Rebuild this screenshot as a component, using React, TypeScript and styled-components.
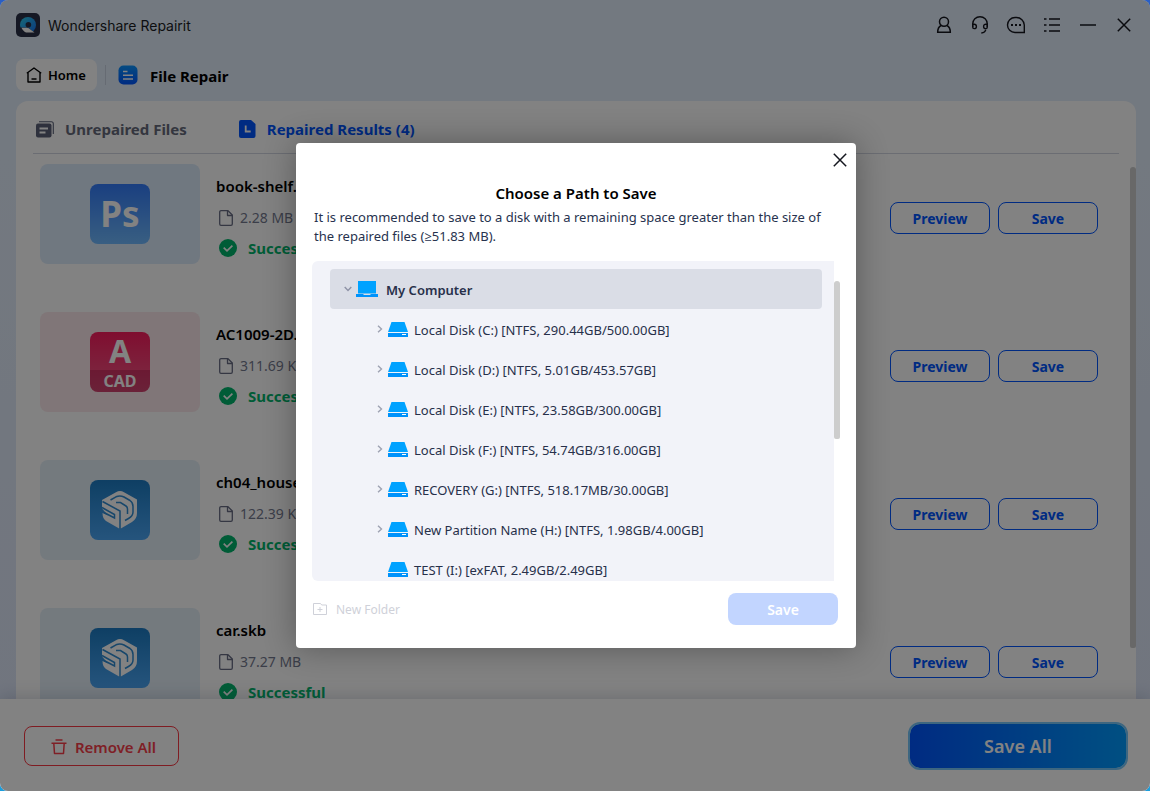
import React from 'react';
import styled, { createGlobalStyle } from 'styled-components';

const GlobalStyle = createGlobalStyle`
  *, *::before, *::after { box-sizing: border-box; }
  body {
    margin: 0;
    background: linear-gradient(#2a5fc4, #1c9edc);
    font-family: "Noto Sans", "Open Sans", sans-serif;
    font-size: 13px;
    color: #000;
  }
  button { font: inherit; cursor: pointer; padding: 0; }
  svg { display: block; flex: none; }
  ul { list-style: none; margin: 0; padding: 0; }
  h1, h2, h3, p { margin: 0; }
`;

/* ---------- window frame ---------- */

const Window = styled.div`
  position: relative;
  display: flex;
  flex-direction: column;
  height: 100vh;
  overflow: hidden;
  border-radius: 8px;
  background: linear-gradient(#e2edfb 20%, #dde5f8);
`;

const TitleBar = styled.header`
  flex: none;
  display: flex;
  align-items: center;
  height: 50px;
  padding: 0 8px 0 16px;
`;

const AppName = styled.span`
  flex: 1;
  margin-left: 8px;
  font-family: Inter, sans-serif;
  font-size: 14px;
  color: #1a1d24;
`;

const IconButton = styled.button`
  display: grid;
  place-items: center;
  width: 36px;
  height: 36px;
  border: 0;
  background: none;
  color: #15171f;
`;

const Breadcrumb = styled.nav`
  flex: none;
  display: flex;
  align-items: center;
  padding: 9px 16px 10px;
`;

const HomeButton = styled.button`
  display: flex;
  align-items: center;
  gap: 6px;
  height: 32px;
  padding: 0 11px 0 10px;
  border: 0;
  border-radius: 8px;
  background: #fff;
  color: #000;
  font-weight: 600;
`;

const Separator = styled.span`
  width: 1px;
  height: 20px;
  margin: 0 12px 0 8px;
  background: #c9d2e2;
`;

const PageTitle = styled.h1`
  margin-left: 12px;
  padding-top: 2px;
  font-size: 15px;
  line-height: 24px;
  font-weight: 700;
`;

/* ---------- results card ---------- */

const Card = styled.main`
  flex: 1;
  min-height: 0;
  display: flex;
  flex-direction: column;
  margin: 0 14px 0 16px;
  border-radius: 12px 12px 0 0;
  background: #fff;
`;

const Tabs = styled.div`
  flex: none;
  display: flex;
  gap: 52px;
  margin: 0 17px;
  padding: 4px 3px 0;
  border-bottom: 1px solid #d2d6e2;
`;

const Tab = styled.button<{ $active?: boolean }>`
  display: flex;
  align-items: center;
  gap: 11px;
  height: 48px;
  border: 0;
  background: none;
  font-size: 15px;
  font-weight: 700;
  color: ${(p) => (p.$active ? '#0055ff' : '#666b7c')};
`;

const ListArea = styled.div`
  flex: 1;
  min-height: 0;
  display: flex;
  overflow: hidden;
`;

const FileList = styled.ul`
  flex: 1;
  padding: 10px 32px 0 24px;
`;

const FileRow = styled.li`
  display: flex;
  align-items: flex-start;
  gap: 16px;
  padding-bottom: 48px;
`;

const Thumb = styled.div<{ $bg: string }>`
  flex: none;
  display: grid;
  place-items: center;
  width: 160px;
  height: 100px;
  border-radius: 8px;
  background: ${(p) => p.$bg};
`;

const FileBadge = styled.div<{ $from: string; $to: string }>`
  display: flex;
  flex-direction: column;
  align-items: center;
  justify-content: center;
  width: 60px;
  height: 60px;
  border-radius: 8px;
  background: linear-gradient(${(p) => p.$from}, ${(p) => p.$to});
  color: #fff;
  font-weight: 700;
`;

const PsLabel = styled.span`
  font-size: 35px;
  line-height: 60px;
`;

const CadLetter = styled.span`
  font-size: 32px;
  line-height: 38px;
`;

const CadBand = styled.span`
  align-self: stretch;
  border-radius: 0 0 8px 8px;
  font-size: 16px;
  line-height: 22px;
  text-align: center;
  background: rgba(110, 0, 40, 0.25);
`;

const FileInfo = styled.div`
  flex: 1;
  display: flex;
  flex-direction: column;
  padding-top: 10px;
`;

const FileName = styled.h3`
  font-size: 15px;
  line-height: 24px;
  font-weight: 600;
`;

const FileSize = styled.p`
  display: flex;
  align-items: center;
  gap: 7px;
  margin-top: 8px;
  padding-left: 3px;
  font-size: 14px;
  line-height: 24px;
  color: #757a8f;
`;

const FileStatus = styled.p`
  display: flex;
  align-items: center;
  gap: 11px;
  margin-top: 6px;
  padding-left: 3px;
  font-size: 15px;
  line-height: 24px;
  font-weight: 700;
  color: #00b56c;
`;

const RowActions = styled.div`
  display: flex;
  gap: 8px;
  padding-top: 38px;
`;

const OutlineButton = styled.button`
  width: 100px;
  height: 32px;
  border: 1px solid #0055ff;
  border-radius: 8px;
  background: none;
  color: #0055ff;
  font-size: 14px;
  font-weight: 700;
`;

const ScrollTrack = styled.div<{ $top: number }>`
  flex: none;
  width: 6px;
  padding-top: ${(p) => p.$top}px;
`;

const ScrollThumb = styled.div<{ $length: number }>`
  height: ${(p) => p.$length}px;
  border-radius: 3px 3px 2px 2px;
  background: #cdcdcd;
`;

/* ---------- bottom bar ---------- */

const BottomBar = styled.footer`
  position: relative;
  flex: none;
  display: flex;
  align-items: center;
  justify-content: space-between;
  height: 92px;
  padding: 2px 22px 0 24px;
  background: #fff;
  box-shadow: 0 -2px 16px rgba(60, 70, 100, 0.22);
`;

const RemoveAll = styled.button`
  display: flex;
  align-items: center;
  justify-content: center;
  gap: 8px;
  width: 155px;
  height: 40px;
  padding: 2px 0 0 4px;
  border: 1px solid #fa3743;
  border-radius: 8px;
  background: none;
  color: #fa3e4b;
  font-size: 15px;
  font-weight: 600;
`;

const SaveAll = styled.button`
  width: 220px;
  height: 48px;
  border: 2px solid #78c8fb;
  border-radius: 12px;
  background: linear-gradient(90deg, #0055ff, #009cff) padding-box;
  background-color: #78c8fb;
  color: #fff;
  font-size: 18px;
  font-weight: 600;
`;

/* ---------- save dialog ---------- */

const Backdrop = styled.div`
  position: absolute;
  inset: 0;
  display: flex;
  align-items: center;
  justify-content: center;
  padding-left: 2px;
  background: rgba(0, 0, 0, 0.49);
`;

const Dialog = styled.section`
  display: flex;
  flex-direction: column;
  width: 560px;
  padding: 0 16px 23px;
  border-radius: 4px;
  background: #fff;
  box-shadow: 0 0 32px rgba(0, 0, 0, 0.32);
`;

const CloseButton = styled(IconButton)`
  align-self: flex-end;
  width: 32px;
  height: 34px;
  margin-right: -16px;
`;

const DialogTitle = styled.h2`
  margin-top: 4px;
  text-align: center;
  font-size: 15px;
  line-height: 24px;
  font-weight: 600;
`;

const DialogText = styled.p`
  padding: 3px 0 0 2px;
  line-height: 19px;
  color: #27324e;
`;

const TreeArea = styled.div`
  display: flex;
  height: 320px;
  margin-top: 15px;
`;

const Tree = styled.ul`
  width: 522px;
  padding: 8px 12px 0 18px;
  overflow: hidden;
  border-radius: 6px 0 0 6px;
  background: #f2f3f9;
`;

const TreeRow = styled.li<{ $root?: boolean }>`
  display: flex;
  align-items: center;
  height: 40px;
  padding-left: ${(p) => (p.$root ? 12 : 44)}px;
  border-radius: 4px;
  background: ${(p) => (p.$root ? '#dadde6' : 'transparent')};
  color: #27304a;
  font-weight: ${(p) => (p.$root ? 600 : 400)};
`;

const ChevronSlot = styled.span`
  display: grid;
  place-items: center;
  width: 12px;
  height: 12px;
  margin-right: 2px;
`;

const TreeLabel = styled.span<{ $gap: number }>`
  margin-left: ${(p) => p.$gap}px;
  padding-top: 2px;
  white-space: nowrap;
`;

const DialogActions = styled.div`
  display: flex;
  align-items: center;
  justify-content: space-between;
  padding: 12px 2px 0 1px;
`;

const NewFolder = styled.button`
  display: flex;
  align-items: center;
  gap: 9px;
  border: 0;
  background: none;
  color: #cfd1d9;
  font-size: 12px;
`;

const DialogSave = styled.button`
  width: 110px;
  height: 32px;
  border: 0;
  border-radius: 8px;
  background: #c2d5ff;
  color: #fff;
  font-size: 14px;
  font-weight: 600;
`;

/* ---------- icons ---------- */

const AppLogo = () => (
  <svg width="24" height="24" viewBox="0 0 24 24" aria-hidden="true">
    <defs>
      <linearGradient id="ring" x1="0" y1="0" x2="1" y2="1">
        <stop offset="0" stopColor="#2fd0ee" />
        <stop offset="1" stopColor="#1672f5" />
      </linearGradient>
    </defs>
    <rect width="24" height="24" rx="5" fill="#2a3048" />
    <circle cx="12" cy="12" r="8" fill="url(#ring)" />
    <path d="M3.500 14.500h8.500L19 20H8C5.500 19 4 17 3.500 14.500z" fill="#2a3048" />
    <path d="M5.500 14.800h6.500l6.500 4.800h-8.500C8 18.500 6.300 17 5.500 14.800z" fill="#fff" />
    <circle cx="12.400" cy="11.800" r="2.800" fill="#2a3048" />
  </svg>
);

const UserIcon = () => (
  <svg width="18" height="18" viewBox="0 0 18 18" fill="none" stroke="currentColor" strokeWidth="1.500" aria-hidden="true">
    <circle cx="9" cy="5.800" r="4.500" />
    <path d="M6 9.500C3.700 10.700 2.700 13 2.700 16.300h12.600c0-3.300-1-5.600-3.300-6.800" />
  </svg>
);

const HeadsetIcon = () => (
  <svg width="18" height="18" viewBox="0 0 18 18" fill="none" stroke="currentColor" strokeWidth="1.400" aria-hidden="true">
    <path d="M1.700 11V8a7.300 7.300 0 0 1 14.600 0v3" />
    <path d="M1.700 8.200h1.500a2.200 2.200 0 0 1 2.200 2.200 2.200 2.200 0 0 1-2.200 2.200c-1 0-1.500-.7-1.500-1.700z" />
    <path d="M16.300 8.200h-1.500a2.200 2.200 0 0 0-2.200 2.200 2.200 2.200 0 0 0 2.200 2.200c1 0 1.500-.7 1.500-1.700z" />
    <path d="M14.800 13.700c-.4 1.900-1.800 3.100-4.500 3.300" />
  </svg>
);

const ChatIcon = () => (
  <svg width="20" height="18" viewBox="0 0 20 18" fill="none" stroke="currentColor" strokeWidth="1.400" aria-hidden="true">
    <path d="M18.300 16.500H9A7.500 7.500 0 0 1 9 1.500h1.500A7.800 7.800 0 0 1 18.300 9z" />
    <path d="M5 9h2M9 9h2M13 9h2" strokeWidth="1.800" />
  </svg>
);

const MenuIcon = () => (
  <svg width="16" height="16" viewBox="0 0 16 16" stroke="currentColor" strokeWidth="1.400" aria-hidden="true">
    <path d="M5 2h11M5 8h11M5 14h11M0 2h2.500M0 8h2.500M0 14h2.500" />
  </svg>
);

const MinimizeIcon = () => (
  <svg width="16" height="16" viewBox="0 0 16 16" stroke="currentColor" strokeWidth="1.400" aria-hidden="true">
    <path d="M0 8h16" />
  </svg>
);

const CloseIcon = () => (
  <svg width="14" height="14" viewBox="0 0 14 14" stroke="currentColor" strokeWidth="1.500" aria-hidden="true">
    <path d="M.8.8l12.400 12.400M13.200.8L.8 13.200" />
  </svg>
);

const HomeIcon = () => (
  <svg width="16" height="16" viewBox="0 0 16 16" fill="none" stroke="currentColor" strokeWidth="1.400" strokeLinejoin="round" aria-hidden="true">
    <path d="M.8 6.200L8 1l7.200 5.200" />
    <path d="M2 5.500V15h12V5.500" />
    <path d="M5.500 12h5" />
  </svg>
);

const FileRepairIcon = () => (
  <svg width="20" height="20" viewBox="0 0 20 20" aria-hidden="true">
    <defs>
      <linearGradient id="repair" x1="0" y1="0" x2="0" y2="1">
        <stop offset="0" stopColor="#0a94ff" />
        <stop offset="1" stopColor="#0055ff" />
      </linearGradient>
    </defs>
    <rect x=".5" y=".5" width="19" height="19" rx="5" fill="url(#repair)" />
    <path d="M5 6.500h4.500M5 10.300h10M5 14h10" stroke="#fff" strokeWidth="1.600" />
  </svg>
);

const UnrepairedIcon = () => (
  <svg width="18" height="17" viewBox="0 0 18 17" aria-hidden="true">
    <rect x="0" y="2.500" width="15.500" height="14" rx="2" fill="#5a6178" />
    <path d="M3.500 7.500h8.500M3.500 11.500h6" stroke="#fff" strokeWidth="1.800" />
    <path d="M3 .7h12.300a2 2 0 0 1 2 2V13" fill="none" stroke="#5a6178" strokeWidth="1.100" />
  </svg>
);

const RepairedIcon = () => (
  <svg width="17" height="18" viewBox="0 0 17 18" aria-hidden="true">
    <path d="M2 0h10l4.500 4v12a2 2 0 0 1-2 2H2a2 2 0 0 1-2-2V2a2 2 0 0 1 2-2z" fill="#0055ff" />
    <path d="M6.700 5.500v6h5" fill="none" stroke="#fff" strokeWidth="1.800" />
  </svg>
);

const DocIcon = () => (
  <svg width="14" height="16" viewBox="0 0 14 16" fill="none" stroke="#686d84" strokeWidth="1.300" strokeLinejoin="round" aria-hidden="true">
    <path d="M2 .7h7L13.300 5v9a1.300 1.300 0 0 1-1.300 1.300H2A1.300 1.300 0 0 1 .7 14V2A1.300 1.300 0 0 1 2 .7z" />
    <path d="M8.500.7v4.800h4.800" />
  </svg>
);

const CheckIcon = () => (
  <svg width="18" height="18" viewBox="0 0 18 18" aria-hidden="true">
    <circle cx="9" cy="9" r="9" fill="#00b56c" />
    <path d="M4.700 8.700l3.300 3.200 5.400-5.300" fill="none" stroke="#fff" strokeWidth="1.700" />
  </svg>
);

const SketchUpIcon = () => (
  <svg width="60" height="60" viewBox="0 0 60 60" aria-hidden="true">
    <path d="M12 20L26 12.200Q30 10 34 12.200L47 19.500V33Q47 39 42 42L30 49 16 41Q12.500 38.500 12.500 33L18 35.500 12 28.500z" fill="#fff" />
    <g fill="none" stroke="#2e8bd2" strokeWidth="1.500">
      <path d="M12.500 21.500L30 31V49" />
      <path d="M20.500 20L26 16.800Q30 15 34 17L40 20.500Q43 22.500 43 26.500V32Q43 36 38.500 38.500L35 40.500" />
      <path d="M26 22.500L30.500 22.500 36 26Q37.500 27 37.500 29V34" />
      <path d="M12 27.500L24.500 34.500V38L14 32.500" />
    </g>
  </svg>
);

const TrashIcon = () => (
  <svg width="16" height="16" viewBox="0 0 16 16" fill="none" stroke="currentColor" strokeWidth="1.500" aria-hidden="true">
    <path d="M4.500 1h7M.5 4.300h15" />
    <path d="M2.800 4.300l.7 10.200h9l.7-10.200" strokeLinejoin="round" />
  </svg>
);

const ChevronDown = () => (
  <svg width="8" height="6" viewBox="0 0 8 6" fill="none" stroke="#8e93a6" strokeWidth="1.400" aria-hidden="true">
    <path d="M.7 1L4 4.500 7.300 1" />
  </svg>
);

const ChevronRight = () => (
  <svg width="6" height="8" viewBox="0 0 6 8" fill="none" stroke="#9ea2b2" strokeWidth="1.400" aria-hidden="true">
    <path d="M1 .7L4.500 4 1 7.300" />
  </svg>
);

const LaptopIcon = () => (
  <svg width="22" height="16" viewBox="0 0 22 16" aria-hidden="true">
    <path d="M2 0h18v12.500H2z" fill="#00a2ff" />
    <path d="M0 13h7l1 1h6l1-1h7v3H0z" fill="#0092fb" />
  </svg>
);

const DiskIcon = () => (
  <svg width="20" height="15" viewBox="0 0 20 15" aria-hidden="true">
    <path d="M3.500 0h13L20 10H0z" fill="#00a2ff" />
    <path d="M0 11h20v4H0z" fill="#0092fb" />
    <path d="M14 12.500h4" stroke="#fff" strokeWidth="1" />
  </svg>
);

const NewFolderIcon = () => (
  <svg width="14" height="12" viewBox="0 0 14 12" fill="none" stroke="currentColor" aria-hidden="true">
    <path d="M.5.5h7l1.200 1.500h4.800v9.500H.5zM7 4v5M4.500 6.500h5" />
  </svg>
);

/* ---------- data ---------- */

type Kind = 'ps' | 'cad' | 'skp';

const palette: Record<Kind, { bg: string; from: string; to: string }> = {
  ps: { bg: '#dcebfc', from: '#337cfb', to: '#70baff' },
  cad: { bg: '#fbe8eb', from: '#fa1d5e', to: '#f25a88' },
  skp: { bg: '#e4eff8', from: '#1d7cc4', to: '#4aa6f5' },
};

const files: { name: string; size: string; kind: Kind }[] = [
  { name: 'book-shelf.psd', size: '2.28 MB', kind: 'ps' },
  { name: 'AC1009-2D.dwg', size: '311.69 KB', kind: 'cad' },
  { name: 'ch04_house.skb', size: '122.39 KB', kind: 'skp' },
  { name: 'car.skb', size: '37.27 MB', kind: 'skp' },
];

const disks = [
  { label: 'Local Disk (C:) [NTFS, 290.44GB/500.00GB]', expandable: true },
  { label: 'Local Disk (D:) [NTFS, 5.01GB/453.57GB]', expandable: true },
  { label: 'Local Disk (E:) [NTFS, 23.58GB/300.00GB]', expandable: true },
  { label: 'Local Disk (F:) [NTFS, 54.74GB/316.00GB]', expandable: true },
  { label: 'RECOVERY (G:) [NTFS, 518.17MB/30.00GB]', expandable: true },
  { label: 'New Partition Name (H:) [NTFS, 1.98GB/4.00GB]', expandable: true },
  { label: 'TEST (I:) [exFAT, 2.49GB/2.49GB]', expandable: false },
];

const BadgeContent = ({ kind }: { kind: Kind }) => {
  if (kind === 'ps') return <PsLabel>Ps</PsLabel>;
  if (kind === 'cad')
    return (
      <>
        <CadLetter>A</CadLetter>
        <CadBand>CAD</CadBand>
      </>
    );
  return <SketchUpIcon />;
};

export default function App() {
  return (
    <>
      <GlobalStyle />
      <Window>
        <TitleBar>
          <AppLogo />
          <AppName>Wondershare Repairit</AppName>
          <IconButton aria-label="Account"><UserIcon /></IconButton>
          <IconButton aria-label="Support"><HeadsetIcon /></IconButton>
          <IconButton aria-label="Feedback"><ChatIcon /></IconButton>
          <IconButton aria-label="Menu"><MenuIcon /></IconButton>
          <IconButton aria-label="Minimize"><MinimizeIcon /></IconButton>
          <IconButton aria-label="Close window"><CloseIcon /></IconButton>
        </TitleBar>

        <Breadcrumb>
          <HomeButton><HomeIcon />Home</HomeButton>
          <Separator />
          <FileRepairIcon />
          <PageTitle>File Repair</PageTitle>
        </Breadcrumb>

        <Card>
          <Tabs role="tablist">
            <Tab role="tab" aria-selected={false}><UnrepairedIcon />Unrepaired Files</Tab>
            <Tab role="tab" aria-selected $active><RepairedIcon />Repaired Results (4)</Tab>
          </Tabs>
          <ListArea>
            <FileList>
              {files.map((f) => (
                <FileRow key={f.name}>
                  <Thumb $bg={palette[f.kind].bg}>
                    <FileBadge $from={palette[f.kind].from} $to={palette[f.kind].to}>
                      <BadgeContent kind={f.kind} />
                    </FileBadge>
                  </Thumb>
                  <FileInfo>
                    <FileName>{f.name}</FileName>
                    <FileSize><DocIcon />{f.size}</FileSize>
                    <FileStatus><CheckIcon />Successful</FileStatus>
                  </FileInfo>
                  <RowActions>
                    <OutlineButton>Preview</OutlineButton>
                    <OutlineButton>Save</OutlineButton>
                  </RowActions>
                </FileRow>
              ))}
            </FileList>
            <ScrollTrack $top={13}>
              <ScrollThumb $length={481} />
            </ScrollTrack>
          </ListArea>
        </Card>

        <BottomBar>
          <RemoveAll><TrashIcon />Remove All</RemoveAll>
          <SaveAll>Save All</SaveAll>
        </BottomBar>

        <Backdrop>
          <Dialog role="dialog" aria-modal="true" aria-labelledby="save-title">
            <CloseButton aria-label="Close dialog"><CloseIcon /></CloseButton>
            <DialogTitle id="save-title">Choose a Path to Save</DialogTitle>
            <DialogText>
              It is recommended to save to a disk with a remaining space greater than the size of
              the repaired files (≥51.83 MB).
            </DialogText>
            <TreeArea>
              <Tree role="tree">
                <TreeRow $root role="treeitem" aria-expanded>
                  <ChevronSlot><ChevronDown /></ChevronSlot>
                  <LaptopIcon />
                  <TreeLabel $gap={8}>My Computer</TreeLabel>
                </TreeRow>
                {disks.map((d) => (
                  <TreeRow key={d.label} role="treeitem">
                    <ChevronSlot>{d.expandable && <ChevronRight />}</ChevronSlot>
                    <DiskIcon />
                    <TreeLabel $gap={6}>{d.label}</TreeLabel>
                  </TreeRow>
                ))}
              </Tree>
              <ScrollTrack $top={20}>
                <ScrollThumb $length={158} />
              </ScrollTrack>
            </TreeArea>
            <DialogActions>
              <NewFolder disabled><NewFolderIcon />New Folder</NewFolder>
              <DialogSave disabled>Save</DialogSave>
            </DialogActions>
          </Dialog>
        </Backdrop>
      </Window>
    </>
  );
}
